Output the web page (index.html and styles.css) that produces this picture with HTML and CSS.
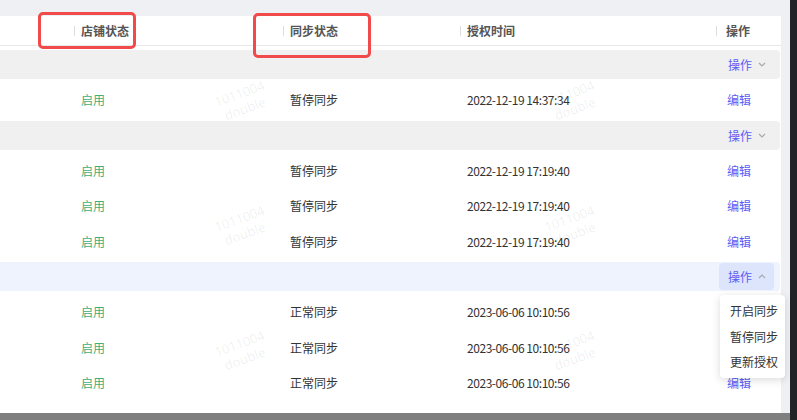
FILE: index.html
```html
<!DOCTYPE html>
<html lang="zh-CN">
<head>
    <meta charset="UTF-8">
    <meta name="viewport" content="width=device-width, initial-scale=1.0">
    <title>店铺同步</title>
    <link rel="stylesheet" href="styles.css">
</head>
<body>
    <div class="main">
        <div class="card">
            <div class="row head">
                <div class="cell"></div>
                <div class="cell"><span class="sep"></span>店铺状态</div>
                <div class="cell"><span class="sep"></span>同步状态</div>
                <div class="cell"><span class="sep"></span>授权时间</div>
                <div class="cell op"><span class="sep"></span>操作</div>
            </div>

            <div class="row group">
                <div class="cell"></div><div class="cell"></div><div class="cell"></div><div class="cell"></div>
                <div class="cell op-btn-cell">
                    <button class="op-btn">操作
                        <svg class="chev" width="8" height="5" viewBox="0 0 8 5"><polyline points="1,1 4,4 7,1"/></svg>
                    </button>
                </div>
            </div>
            <div class="rows">
                <div class="row">
                    <div class="cell"></div>
                    <div class="cell on">启用</div>
                    <div class="cell">暂停同步</div>
                    <div class="cell date">2022-12-19 14:37:34</div>
                    <div class="cell op link">编辑</div>
                </div>
            </div>

            <div class="row group">
                <div class="cell"></div><div class="cell"></div><div class="cell"></div><div class="cell"></div>
                <div class="cell op-btn-cell">
                    <button class="op-btn">操作
                        <svg class="chev" width="8" height="5" viewBox="0 0 8 5"><polyline points="1,1 4,4 7,1"/></svg>
                    </button>
                </div>
            </div>
            <div class="rows">
                <div class="row">
                    <div class="cell"></div>
                    <div class="cell on">启用</div>
                    <div class="cell">暂停同步</div>
                    <div class="cell date">2022-12-19 17:19:40</div>
                    <div class="cell op link">编辑</div>
                </div>
                <div class="row">
                    <div class="cell"></div>
                    <div class="cell on">启用</div>
                    <div class="cell">暂停同步</div>
                    <div class="cell date">2022-12-19 17:19:40</div>
                    <div class="cell op link">编辑</div>
                </div>
                <div class="row">
                    <div class="cell"></div>
                    <div class="cell on">启用</div>
                    <div class="cell">暂停同步</div>
                    <div class="cell date">2022-12-19 17:19:40</div>
                    <div class="cell op link">编辑</div>
                </div>
            </div>

            <div class="row group active">
                <div class="cell"></div><div class="cell"></div><div class="cell"></div><div class="cell"></div>
                <div class="cell op-btn-cell">
                    <button class="op-btn open">操作
                        <svg class="chev" width="8" height="5" viewBox="0 0 8 5"><polyline points="1,4 4,1 7,4"/></svg>
                    </button>
                    <ul class="menu">
                        <li>开启同步</li>
                        <li>暂停同步</li>
                        <li>更新授权</li>
                    </ul>
                </div>
            </div>
            <div class="rows">
                <div class="row">
                    <div class="cell"></div>
                    <div class="cell on">启用</div>
                    <div class="cell">正常同步</div>
                    <div class="cell date">2023-06-06 10:10:56</div>
                    <div class="cell op link">编辑</div>
                </div>
                <div class="row">
                    <div class="cell"></div>
                    <div class="cell on">启用</div>
                    <div class="cell">正常同步</div>
                    <div class="cell date">2023-06-06 10:10:56</div>
                    <div class="cell op link">编辑</div>
                </div>
                <div class="row">
                    <div class="cell"></div>
                    <div class="cell on">启用</div>
                    <div class="cell">正常同步</div>
                    <div class="cell date">2023-06-06 10:10:56</div>
                    <div class="cell op link under-menu">编辑</div>
                </div>
            </div>

            <div class="watermarks">
                <div class="wm">1011004<br>double</div>
                <div class="wm">1011004<br>double</div>
                <div class="wm">1011004<br>double</div>
                <div class="wm">1011004<br>double</div>
                <div class="wm">1011004<br>double</div>
                <div class="wm">1011004<br>double</div>
            </div>

            <div class="mark mark-shop"></div>
            <div class="mark mark-sync"></div>
        </div>
        <div class="bottom-bar"></div>
    </div>
    <div class="side-bar"></div>
</body>
</html>
```

FILE: styles.css
```css
* {
    box-sizing: border-box;
}
html {
    overflow: hidden;
}
body {
    margin: 0;
    height: 420px;
    display: flex;
    overflow: hidden;
    font-family: "Noto Sans CJK SC", "Noto Sans", sans-serif;
    font-size: 12px;
    color: #333;
    background: #eef0f4;
}
.main {
    flex: 1;
    display: flex;
    flex-direction: column;
    padding-top: 16px;
    min-height: 0;
}
.side-bar {
    width: 7px;
    background: #222327;
}
.bottom-bar {
    height: 7px;
    background: #7f7f7f;
}
.card {
    position: relative;
    flex: 1;
    min-height: 0;
    width: 781px;
    background: white;
    overflow: visible;
}
.row {
    display: grid;
    grid-template-columns: 74px 209px 177px 256px 65px;
    align-items: center;
    height: 35.5px;
}
.cell {
    padding-left: 7px;
    white-space: nowrap;
}
.cell.op {
    padding-left: 11px;
}
.date {
    letter-spacing: -0.45px;
}
.head {
    height: 30px;
    border-bottom: 1px solid #e8e8e8;
    color: #555;
    font-weight: 700;
}
.head .cell {
    display: flex;
    align-items: center;
    padding-left: 0;
    gap: 6px;
}
.head .cell.op {
    gap: 9px;
}
.sep {
    width: 1px;
    height: 10px;
    background: #ddd;
}
.group {
    height: 29px;
    width: 780px;
    margin-top: 4px;
    background: #f0f0f0;
    border-radius: 0 4px 4px 0;
}
.rows + .group {
    margin-top: 0;
}
.group.active {
    background: #eff3fe;
}
.rows {
    padding: 3px 0;
}
.on {
    color: #3fae7a;
}
.link {
    color: #5a5ef4;
}
.op-btn-cell {
    position: relative;
    padding-left: 3px;
}
.op-btn {
    display: flex;
    align-items: center;
    gap: 6px;
    height: 27px;
    width: 55px;
    padding: 0 0 0 9px;
    border: none;
    border-radius: 4px;
    background: transparent;
    color: #5a5ef4;
    font-family: inherit;
    font-size: 12px;
}
.op-btn.open {
    background: #dde5fd;
}
.chev {
    fill: none;
    stroke: #a8a8b0;
    stroke-width: 1.2;
}
.menu {
    position: absolute;
    top: 32px;
    left: 4px;
    width: 65px;
    margin: 0;
    padding: 3px 0;
    list-style: none;
    background: white;
    border-radius: 4px;
    box-shadow: 0 2px 8px rgba(0, 0, 0, 0.15);
    z-index: 3;
}
.menu li {
    height: 25.5px;
    line-height: 25.5px;
    padding-left: 10px;
    color: #333;
}
.watermarks {
    position: absolute;
    inset: 0;
    display: grid;
    grid-template-columns: 330px 330px;
    grid-auto-rows: 125px;
    padding: 22px 0 0 77px;
    overflow: hidden;
    pointer-events: none;
    z-index: 1;
}
.wm {
    display: flex;
    align-items: center;
    justify-content: center;
    text-align: center;
    font-family: "Noto Sans", sans-serif;
    font-size: 13px;
    line-height: 16px;
    color: rgba(0, 0, 0, 0.07);
    transform: rotate(-20deg);
}
.mark {
    position: absolute;
    border: 3px solid #f04a4a;
    border-radius: 5px;
    z-index: 2;
}
.mark-shop {
    left: 38px;
    top: -4px;
    width: 98px;
    height: 37px;
}
.mark-sync {
    left: 253px;
    top: -3px;
    width: 118px;
    height: 45px;
}
```
